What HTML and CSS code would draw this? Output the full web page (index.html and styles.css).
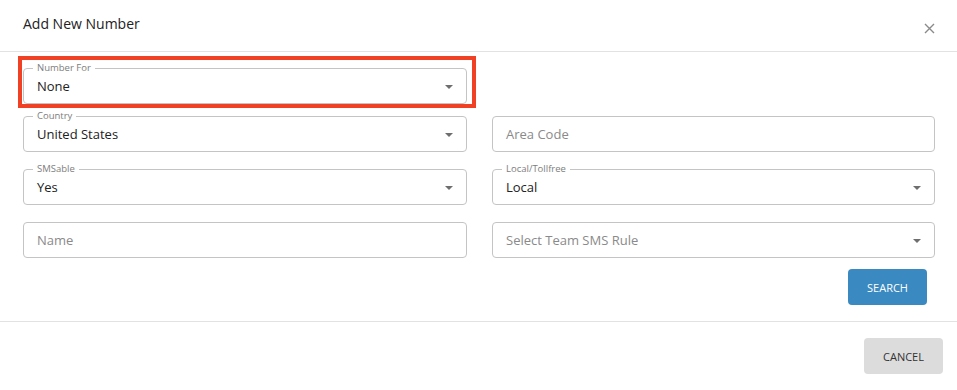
FILE: index.html
```html
<!DOCTYPE html>
<html lang="en">
<head>
  <meta charset="UTF-8" />
  <meta name="viewport" content="width=device-width, initial-scale=1" />
  <title>Add New Number</title>
  <link rel="stylesheet" href="styles.css">
</head>
<body>

  <div class="modal">
    <div class="modal-header">
      <h3>Add New Number</h3>
      <button class="close" aria-label="Close">
        <svg width="11" height="11" viewBox="0 0 11 11">
          <path d="M1 1 L10 10 M10 1 L1 10" stroke="#8a8a8a" stroke-width="1.4" fill="none" />
        </svg>
      </button>
    </div>

    <div class="modal-body">
      <div class="form-row first">
        <div class="field select">
          <span class="field-label">Number For</span>
          <span class="value">None</span>
          <span class="arrow"></span>
          <!-- annotation box -->
          <span class="highlight"></span>
        </div>
      </div>

      <div class="form-row">
        <div class="field select">
          <span class="field-label">Country</span>
          <span class="value">United States</span>
          <span class="arrow"></span>
        </div>
        <div class="field">
          <span class="placeholder">Area Code</span>
        </div>
      </div>

      <div class="form-row">
        <div class="field select">
          <span class="field-label">SMSable</span>
          <span class="value">Yes</span>
          <span class="arrow"></span>
        </div>
        <div class="field select">
          <span class="field-label">Local/Tollfree</span>
          <span class="value">Local</span>
          <span class="arrow"></span>
        </div>
      </div>

      <div class="form-row">
        <div class="field">
          <span class="placeholder">Name</span>
        </div>
        <div class="field select">
          <span class="placeholder">Select Team SMS Rule</span>
          <span class="arrow"></span>
        </div>
      </div>

      <div class="actions">
        <button class="btn btn-primary">Search</button>
      </div>
    </div>

    <div class="modal-footer">
      <button class="btn btn-default">Cancel</button>
    </div>
  </div>

</body>
</html>
```

FILE: styles.css
```css
body {
  margin: 0;
  padding: 0;
  background: #fff;
  font-family: 'Open Sans', sans-serif;
  color: #222;
}

.modal {
  width: 957px;
  height: 390px;
  background: #fff;
}

.modal-header {
  display: flex;
  justify-content: space-between;
  align-items: flex-start;
  height: 52px;
  box-sizing: border-box;
  padding: 14px 22px 0 23px;
  border-bottom: 1px solid #e2e2e2;
}

.modal-header h3 {
  margin: 0;
  font-size: 14px;
  line-height: 20px;
  font-weight: 400;
  color: #222;
}

.close {
  border: none;
  background: none;
  padding: 0;
  margin-top: 9px;
  width: 11px;
  height: 11px;
  cursor: pointer;
  display: flex;
}

.modal-body {
  padding: 16px 22px 16px 23px;
  border-bottom: 1px solid #e2e2e2;
}

.form-row {
  display: grid;
  grid-template-columns: 444px 443px;
  column-gap: 25px;
  margin-bottom: 17px;
}

.form-row.first {
  margin-bottom: 12px;
}

.field {
  position: relative;
  display: flex;
  align-items: center;
  height: 36px;
  box-sizing: border-box;
  padding: 0 13px;
  border: 1px solid #c4c4c4;
  border-radius: 4px;
  font-size: 13px;
}

.field-label {
  position: absolute;
  left: 9px;
  top: -7px;
  padding: 0 4px;
  background: #fff;
  font-size: 9.5px;
  line-height: 12px;
  color: #7d7d7d;
}

.value {
  flex: 1;
  color: #222;
}

.placeholder {
  flex: 1;
  color: #8a8a8a;
}

.arrow {
  width: 0;
  height: 0;
  border-left: 4px solid transparent;
  border-right: 4px solid transparent;
  border-top: 4px solid #6e6e6e;
  margin-top: 1px;
}

.highlight {
  position: absolute;
  left: -6px;
  top: -13px;
  right: -10px;
  bottom: -5px;
  border: 4px solid #f04124;
  pointer-events: none;
}

.actions {
  display: flex;
  justify-content: flex-end;
  padding-right: 8px;
  margin-top: -6px;
}

.btn {
  height: 36px;
  width: 79px;
  border: none;
  border-radius: 4px;
  font-family: 'Open Sans', sans-serif;
  font-size: 11px;
  text-transform: uppercase;
  cursor: pointer;
}

.btn-primary {
  background: #3a89c0;
  color: #fff;
}

.btn-default {
  background: #dcdcdc;
  color: #333;
}

.modal-footer {
  display: flex;
  justify-content: flex-end;
  padding: 16px 14px 16px 0;
}
```
